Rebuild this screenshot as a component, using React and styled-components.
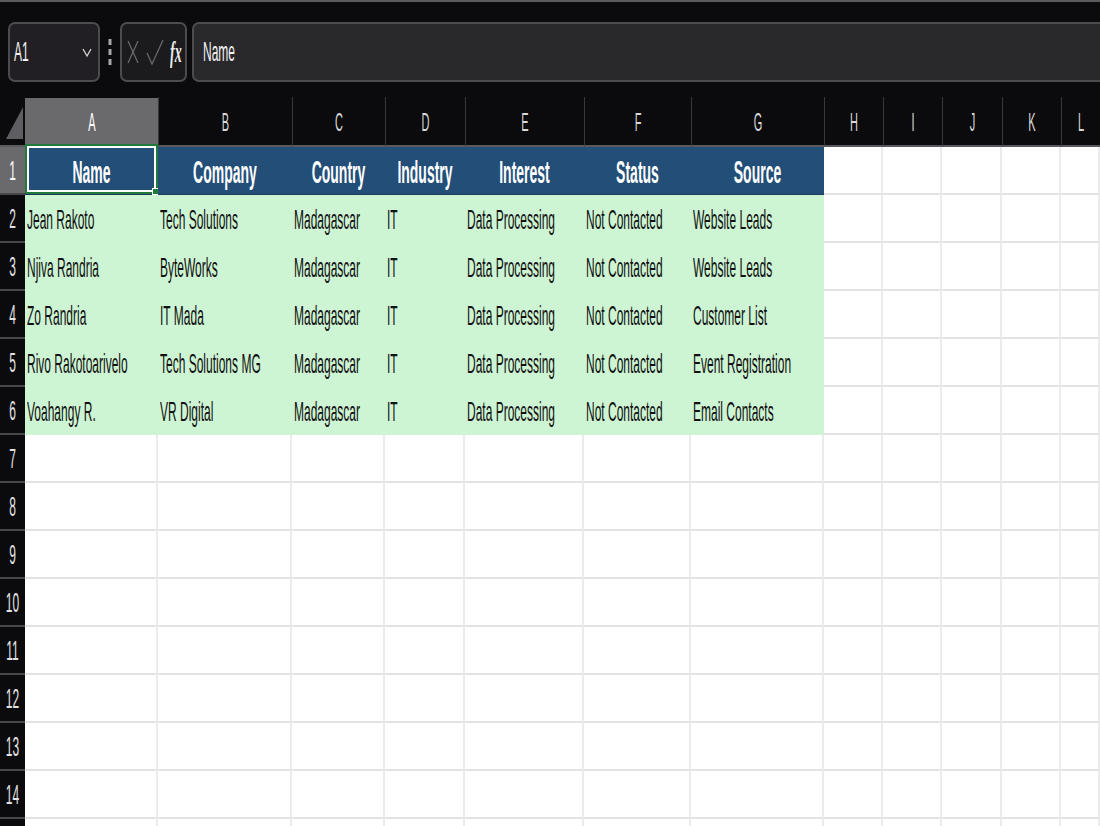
import React from 'react'
import styled, { createGlobalStyle } from 'styled-components'

const GlobalStyle = createGlobalStyle`
  html, body {
    margin: 0;
    padding: 0;
    background: #0b0a0d;
    overflow: hidden;
  }
  body {
    font-family: "Liberation Sans", Arial, sans-serif;
  }
`

const LETTERS = ['A', 'B', 'C', 'D', 'E', 'F', 'G', 'H', 'I', 'J', 'K', 'L']
const DATA_COLS = 7
const ROW_COUNT = 15

const HEADERS = ['Name', 'Company', 'Country', 'Industry', 'Interest', 'Status', 'Source']

const LEADS = [
  ['Jean Rakoto', 'Tech Solutions', 'Madagascar', 'IT', 'Data Processing', 'Not Contacted', 'Website Leads'],
  ['Njiva Randria', 'ByteWorks', 'Madagascar', 'IT', 'Data Processing', 'Not Contacted', 'Website Leads'],
  ['Zo Randria', 'IT Mada', 'Madagascar', 'IT', 'Data Processing', 'Not Contacted', 'Customer List'],
  ['Rivo Rakotoarivelo', 'Tech Solutions MG', 'Madagascar', 'IT', 'Data Processing', 'Not Contacted', 'Event Registration'],
  ['Voahangy R.', 'VR Digital', 'Madagascar', 'IT', 'Data Processing', 'Not Contacted', 'Email Contacts'],
]

const Page = styled.div`
  width: 1100px;
  height: 826px;
  display: flex;
  flex-direction: column;
  background: #0b0a0d;
  border-top: 2px solid #5c5b5f;
  box-sizing: border-box;
  overflow: hidden;

  & > * {
    flex: none;
  }
`

// the text in this sheet is drawn tall and narrow
const Tall = styled.span`
  display: inline-block;
  white-space: nowrap;
  transform: scaleY(${p => p.$scale || 2.3});
`

const FormulaBar = styled.div`
  display: flex;
  align-items: stretch;
  height: 60px;
  margin-top: 20px;
  padding-left: 8px;
`

const NameBox = styled.div`
  width: 92px;
  box-sizing: border-box;
  display: flex;
  align-items: center;
  justify-content: space-between;
  padding: 0 6px 0 4px;
  background: #211f23;
  border: 2px solid #4c4b4f;
  border-radius: 7px;
  color: #f2f2f2;
  font-size: 12px;
`

const Dots = styled.div`
  width: 20px;
  display: flex;
  align-items: center;
  justify-content: center;
`

const FxBox = styled.div`
  width: 67px;
  box-sizing: border-box;
  display: flex;
  align-items: center;
  gap: 6px;
  padding-left: 4px;
  background: #1b1a1d;
  border: 2px solid #4c4b4f;
  border-radius: 7px;
`

const Fx = styled.span`
  font-family: "Liberation Serif", "Times New Roman", serif;
  font-style: italic;
  font-weight: 700;
  font-size: 14px;
  color: #ececec;
`

const FormulaInput = styled.div`
  flex: 1;
  margin-left: 5px;
  margin-right: -12px;
  display: flex;
  align-items: center;
  padding-left: 9px;
  background: #29282b;
  border: 2px solid #4c4b4f;
  border-radius: 7px;
  color: #f2f2f2;
  font-size: 12px;
`

const Sheet = styled.div`
  margin-top: 15px;
  display: grid;
  grid-template-columns: 25px 133px 134px 93px 80px 119px 107px 133px 59px 59px 60px 59px 1fr;
  grid-template-rows: 50px repeat(${ROW_COUNT}, 48px);
`

const Corner = styled.div`
  position: relative;
  background: #0b0a0d;
  border-bottom: 2px solid #5a595d;
`

const ColHead = styled.div`
  display: flex;
  align-items: center;
  justify-content: center;
  margin-top: ${p => (p.$active ? '1px' : '0')};
  background: ${p => (p.$active ? '#6a696c' : '#0b0a0d')};
  border-left: 1px solid ${p => (p.$active ? '#6a696c' : '#38373b')};
  border-bottom: 2px solid #5a595d;
  color: ${p => (p.$active ? '#ffffff' : '#d9d9d9')};
  font-size: 11px;
  padding-top: 1px;
`

const RowHead = styled.div`
  display: flex;
  align-items: center;
  justify-content: center;
  background: ${p => (p.$active ? '#6a696c' : '#0b0a0d')};
  border-bottom: 2px solid #47464a;
  color: ${p => (p.$active ? '#ffffff' : '#e2e2e2')};
  font-size: 12px;
  padding-top: 1px;
`

const Cell = styled.div`
  position: relative;
  display: flex;
  align-items: center;
  justify-content: ${p => (p.$kind === 'head' ? 'center' : 'flex-start')};
  padding: ${p => (p.$kind === 'head' ? '0' : '1px 0 0 2px')};
  box-sizing: border-box;
  overflow: visible;
  font-size: ${p => (p.$kind === 'head' ? '14px' : '12px')};
  font-weight: ${p => (p.$kind === 'head' ? 700 : 400)};
  color: ${p => (p.$kind === 'head' ? '#ffffff' : '#111111')};
  background: ${p =>
    p.$kind === 'head' ? '#234e78' : p.$kind === 'data' ? '#cdf4d3' : '#ffffff'};
  border-right: ${p => (p.$kind === 'empty' ? '2px solid #ebebed' : 'none')};
  border-bottom: ${p =>
    p.$kind === 'empty' ? '2px solid #e3e3e5' : p.$kind === 'head' ? '1px solid #1b3c5e' : 'none'};
`

const Selection = styled.div`
  position: absolute;
  top: -3px;
  left: 0;
  right: 0;
  bottom: 0;
  border: 2px solid #1f7a3c;
  box-shadow: inset 0 0 0 2px #ffffff;
  pointer-events: none;
`

const FillHandle = styled.div`
  position: absolute;
  right: -3px;
  bottom: -3px;
  width: 5px;
  height: 5px;
  background: #1f7a3c;
  border: 1px solid #ffffff;
`

const Triangle = styled.svg`
  position: absolute;
  right: 2px;
  bottom: 6px;
`

const Chevron = () => (
  <svg width="10" height="14" viewBox="0 0 10 14">
    <polyline points="1,4 5,11 9,4" fill="none" stroke="#d6d6d6" strokeWidth="1.3" />
  </svg>
)

const VDots = () => (
  <svg width="4" height="28" viewBox="0 0 4 28">
    <rect x="0.5" y="1" width="3" height="6" fill="#a7a7a7" />
    <rect x="0.5" y="11" width="3" height="6" fill="#a7a7a7" />
    <rect x="0.5" y="21" width="3" height="6" fill="#a7a7a7" />
  </svg>
)

const Cancel = () => (
  <svg width="14" height="30" viewBox="0 0 14 30">
    <line x1="2" y1="4" x2="12" y2="26" stroke="#6c6b6f" strokeWidth="1.2" />
    <line x1="12" y1="4" x2="2" y2="26" stroke="#6c6b6f" strokeWidth="1.2" />
  </svg>
)

const Enter = () => (
  <svg width="18" height="30" viewBox="0 0 18 30">
    <polyline points="1,16 6,27 17,3" fill="none" stroke="#6c6b6f" strokeWidth="1.2" />
  </svg>
)

const cellKind = (row, col) => {
  if (col >= DATA_COLS) return 'empty'
  if (row === 1) return 'head'
  if (row <= LEADS.length + 1) return 'data'
  return 'empty'
}

const cellText = (row, col) => {
  if (col >= DATA_COLS) return ''
  if (row === 1) return HEADERS[col]
  const lead = LEADS[row - 2]
  return lead ? lead[col] : ''
}

export default function App() {
  const rows = Array.from({ length: ROW_COUNT }, (_, i) => i + 1)

  return (
    <>
      <GlobalStyle />
      <Page>
        <FormulaBar>
          <NameBox>
            <Tall>A1</Tall>
            <Chevron />
          </NameBox>
          <Dots>
            <VDots />
          </Dots>
          <FxBox>
            <Cancel />
            <Enter />
            <Tall $scale={2.1}>
              <Fx>fx</Fx>
            </Tall>
          </FxBox>
          <FormulaInput>
            <Tall>Name</Tall>
          </FormulaInput>
        </FormulaBar>

        <Sheet>
          <Corner>
            <Triangle width="17" height="32" viewBox="0 0 17 32">
              <polygon points="17,0 17,32 0,32" fill="#5e5d61" />
            </Triangle>
          </Corner>
          {LETTERS.map(l => (
            <ColHead key={l} $active={l === 'A'}>
              <Tall>{l}</Tall>
            </ColHead>
          ))}

          {rows.map(row => (
            <React.Fragment key={row}>
              <RowHead $active={row === 1}>
                {row < ROW_COUNT && <Tall>{row}</Tall>}
              </RowHead>
              {LETTERS.map((l, col) => {
                const text = cellText(row, col)
                return (
                  <Cell key={l} $kind={cellKind(row, col)}>
                    {text && <Tall>{text}</Tall>}
                    {row === 1 && col === 0 && (
                      <Selection>
                        <FillHandle />
                      </Selection>
                    )}
                  </Cell>
                )
              })}
            </React.Fragment>
          ))}
        </Sheet>
      </Page>
    </>
  )
}
